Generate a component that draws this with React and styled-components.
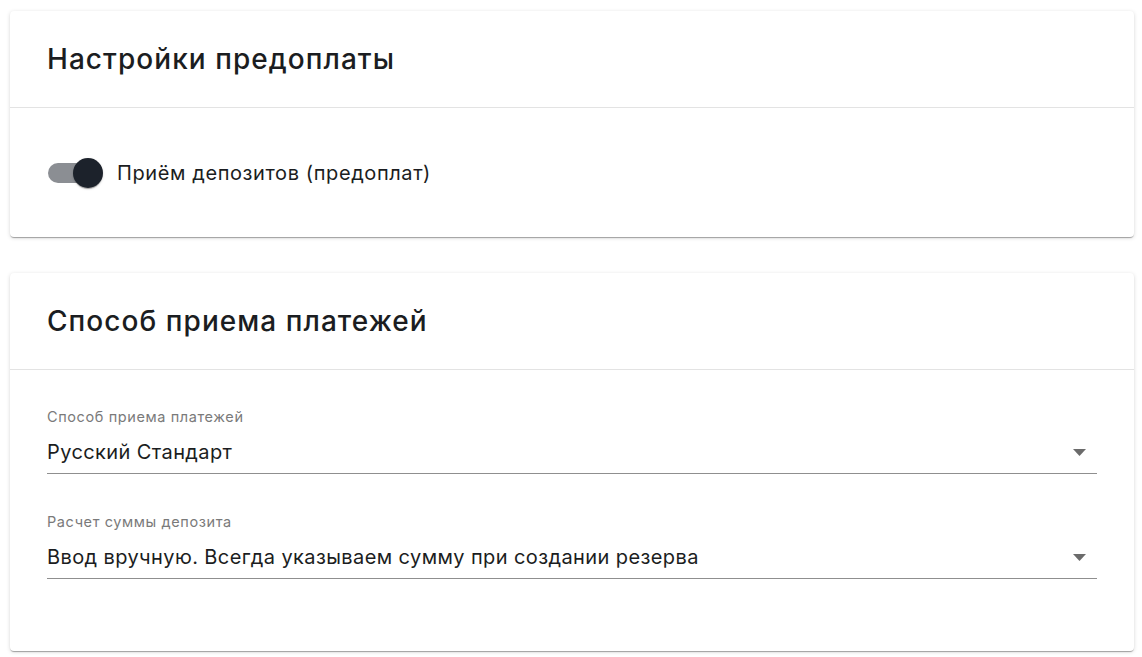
import React from "react";
import styled, { createGlobalStyle } from "styled-components";

const Global = createGlobalStyle`
  html, body { margin: 0; padding: 0; background: #ffffff; }
  body { font-family: Inter, "Noto Sans", sans-serif; color: #1b1d21; }
`;

const Page = styled.div`
  display: flex;
  flex-direction: column;
  gap: 36px;
  padding: 11px 8px 6px 10px;
`;

const Card = styled.section`
  background: #fff;
  border-radius: 4px;
  box-shadow: 0 2px 1px -1px rgba(0,0,0,0.2), 0 1px 1px 0 rgba(0,0,0,0.14), 0 1px 4px 0 rgba(0,0,0,0.14);
`;

const CardHeader = styled.header`
  height: 96px;
  display: flex;
  align-items: center;
  padding: 0 37px;
  border-bottom: 1px solid #e3e3e3;
`;

const Title = styled.h2`
  margin: 0;
  font-size: 28px;
  font-weight: 500;
  letter-spacing: 1.05px;
  color: #1b1d21;
`;

const ToggleBody = styled.div`
  height: 129px;
  display: flex;
  align-items: center;
  padding: 0 38px;
`;

const SwitchRow = styled.label`
  display: flex;
  align-items: center;
  gap: 17px;
  font-size: 20px;
  letter-spacing: 0.6px;
  color: #1b1d21;
`;

const Track = styled.span`
  position: relative;
  display: inline-block;
  width: 52px;
  height: 20px;
  border-radius: 10px;
  background: ${p => (p.$on ? "#8b8e93" : "#bdbdbd")};
`;

const Thumb = styled.span`
  position: absolute;
  top: -5px;
  left: ${p => (p.$on ? "25px" : "-2px")};
  width: 30px;
  height: 30px;
  border-radius: 50%;
  background: ${p => (p.$on ? "#1c222b" : "#fafafa")};
  box-shadow: 0 2px 1px -1px rgba(0,0,0,0.2), 0 1px 1px 0 rgba(0,0,0,0.14), 0 1px 3px 0 rgba(0,0,0,0.12);
`;

const FormBody = styled.div`
  display: flex;
  flex-direction: column;
  gap: 40px;
  padding: 39px 37px 72px;
`;

const Field = styled.div`
  display: flex;
  flex-direction: column;
`;

const Label = styled.div`
  font-size: 14.5px;
  line-height: 16px;
  letter-spacing: 0.6px;
  color: #7a7a7a;
  margin-bottom: 14px;
`;

const SelectBox = styled.div`
  display: flex;
  align-items: center;
  justify-content: space-between;
  height: 26px;
  padding-bottom: 8px;
  border-bottom: 1px solid #8f8f8f;
`;

const Value = styled.span`
  font-size: 20px;
  line-height: 26px;
  letter-spacing: 0.4px;
  color: #1b1d21;
`;

const Arrow = styled.svg`
  width: 13px;
  height: 7px;
  margin-right: 11px;
  fill: #6b6b6b;
`;

function Select({ label, value }) {
  return (
    <Field>
      <Label>{label}</Label>
      <SelectBox>
        <Value>{value}</Value>
        <Arrow viewBox="0 0 13 7"><path d="M0 0h13L6.5 7z" /></Arrow>
      </SelectBox>
    </Field>
  );
}

export default function App() {
  return (
    <>
      <Global />
      <Page>
        <Card>
          <CardHeader><Title>Настройки предоплаты</Title></CardHeader>
          <ToggleBody>
            <SwitchRow>
              <Track $on><Thumb $on /></Track>
              Приём депозитов (предоплат)
            </SwitchRow>
          </ToggleBody>
        </Card>
        <Card>
          <CardHeader><Title>Способ приема платежей</Title></CardHeader>
          <FormBody>
            <Select label="Способ приема платежей" value="Русский Стандарт" />
            <Select label="Расчет суммы депозита" value="Ввод вручную. Всегда указываем сумму при создании резерва" />
          </FormBody>
        </Card>
      </Page>
    </>
  );
}
